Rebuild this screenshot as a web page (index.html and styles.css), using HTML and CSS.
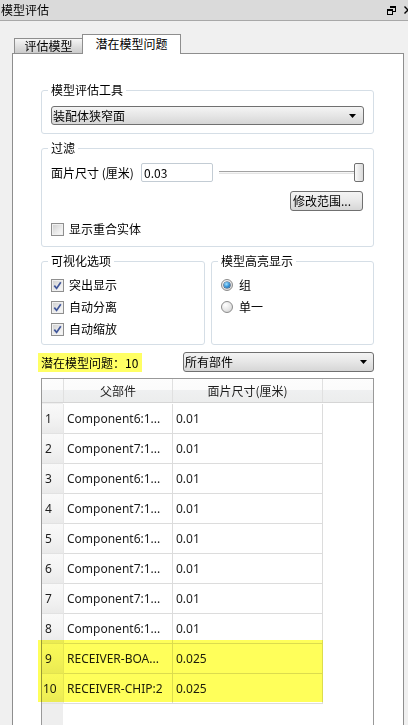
FILE: index.html
```html
<!DOCTYPE html>
<html lang="zh">
<head>
<meta charset="utf-8">
<title>模型评估</title>
<link rel="stylesheet" href="styles.css">
</head>
<body>
<div class="titlebar">
  <span class="title">模型评估</span>
  <svg class="restore" viewBox="0 0 9 9" width="9" height="9" fill="#000">
    <rect x="3" y="0" width="6" height="2"/>
    <rect x="8" y="2" width="1" height="4"/>
    <rect x="6" y="5" width="2" height="1"/>
    <rect x="0" y="3" width="6" height="2"/>
    <rect x="0" y="5" width="1" height="4"/>
    <rect x="5" y="5" width="1" height="4"/>
    <rect x="0" y="8" width="6" height="1"/>
  </svg>
  <svg class="close" viewBox="0 0 8 8" width="8" height="8">
    <path d="M0.5 0.5 L7.5 7.5 M7.5 0.5 L0.5 7.5" stroke="#000" stroke-width="1.4" fill="none"/>
  </svg>
</div>

<div class="tabs">
  <div class="tab">评估模型</div>
  <div class="tab active">潜在模型问题</div>
</div>

<div class="panel">
  <fieldset class="group tool">
    <legend>模型评估工具</legend>
    <div class="combo">
      <span class="combo-text">装配体狭窄面</span>
      <svg class="arrow" viewBox="0 0 7 4" width="7" height="4"><polygon points="0,0 7,0 3.5,4" fill="#000"/></svg>
    </div>
  </fieldset>

  <fieldset class="group filter">
    <legend>过滤</legend>
    <div class="row size-row">
      <span class="size-label">面片尺寸 (厘米)</span>
      <div class="input">0.03</div>
      <div class="slider"><div class="track"></div><div class="thumb"></div></div>
    </div>
    <div class="row btn-row"><div class="button">修改范围...</div></div>
    <div class="opt check-row"><span class="cb"></span><span>显示重合实体</span></div>
  </fieldset>

  <div class="pair">
    <fieldset class="group vis">
      <legend>可视化选项</legend>
      <div class="opts">
        <div class="opt"><span class="cb"><svg viewBox="0 0 9 9" width="9" height="9"><path d="M1.3 4.6 L3.6 7.4 L7.8 1.2" stroke="#41579a" stroke-width="1.7" fill="none"/></svg></span><span>突出显示</span></div>
        <div class="opt"><span class="cb"><svg viewBox="0 0 9 9" width="9" height="9"><path d="M1.3 4.6 L3.6 7.4 L7.8 1.2" stroke="#41579a" stroke-width="1.7" fill="none"/></svg></span><span>自动分离</span></div>
        <div class="opt"><span class="cb"><svg viewBox="0 0 9 9" width="9" height="9"><path d="M1.3 4.6 L3.6 7.4 L7.8 1.2" stroke="#41579a" stroke-width="1.7" fill="none"/></svg></span><span>自动缩放</span></div>
      </div>
    </fieldset>
    <fieldset class="group hl">
      <legend>模型高亮显示</legend>
      <div class="opts">
        <div class="opt radio"><span class="rb on"><span class="dot"></span></span><span>组</span></div>
        <div class="opt radio"><span class="rb"></span><span>单一</span></div>
      </div>
    </fieldset>
  </div>

  <div class="issue-row">
    <span class="issue-label">潜在模型问题：10</span>
    <div class="combo combo-parts">
      <span class="combo-text">所有部件</span>
      <svg class="arrow" viewBox="0 0 7 4" width="7" height="4"><polygon points="0,0 7,0 3.5,4" fill="#000"/></svg>
    </div>
  </div>

  <div class="table">
    <div class="thead">
      <div class="th rn"></div>
      <div class="th c1">父部件</div>
      <div class="th c2">面片尺寸(厘米)</div>
      <div class="th c3"></div>
    </div>
    <div class="tbody">
      <div class="tr"><div class="td rn">1</div><div class="td c1">Component6:1...</div><div class="td c2">0.01</div><div class="td c3"></div></div>
      <div class="tr"><div class="td rn">2</div><div class="td c1">Component7:1...</div><div class="td c2">0.01</div><div class="td c3"></div></div>
      <div class="tr"><div class="td rn">3</div><div class="td c1">Component6:1...</div><div class="td c2">0.01</div><div class="td c3"></div></div>
      <div class="tr"><div class="td rn">4</div><div class="td c1">Component7:1...</div><div class="td c2">0.01</div><div class="td c3"></div></div>
      <div class="tr"><div class="td rn">5</div><div class="td c1">Component6:1...</div><div class="td c2">0.01</div><div class="td c3"></div></div>
      <div class="tr"><div class="td rn">6</div><div class="td c1">Component7:1...</div><div class="td c2">0.01</div><div class="td c3"></div></div>
      <div class="tr"><div class="td rn">7</div><div class="td c1">Component7:1...</div><div class="td c2">0.01</div><div class="td c3"></div></div>
      <div class="tr"><div class="td rn">8</div><div class="td c1">Component6:1...</div><div class="td c2">0.01</div><div class="td c3"></div></div>
      <div class="tr"><div class="td rn">9</div><div class="td c1">RECEIVER-BOA...</div><div class="td c2">0.025</div><div class="td c3"></div></div>
      <div class="tr"><div class="td rn rn2">10</div><div class="td c1">RECEIVER-CHIP:2</div><div class="td c2">0.025</div><div class="td c3"></div></div>
    </div>
    <div class="highlight"></div>
  </div>
</div>
</body>
</html>
```

FILE: styles.css
```css
* { box-sizing: border-box; }
html, body { margin: 0; padding: 0; }
body {
  width: 408px;
  height: 725px;
  overflow: hidden;
  background: #f0f0f0;
  font-family: "Noto Sans CJK SC", "Noto Sans", sans-serif;
  font-size: 12px;
  line-height: 16px;
  color: #000;
}

/* title bar */
.titlebar {
  height: 21px;
  border-bottom: 1px solid #a8a8a8;
  background: #dadada;
  display: flex;
  align-items: center;
  padding-left: 1px;
  overflow: hidden;
}
.title { flex: 1; }
.restore { flex-shrink: 0; margin-right: 8px; }
.close { flex-shrink: 0; margin-right: -4px; }

/* tabs */
.tabs {
  height: 32px;
  display: flex;
  align-items: flex-end;
  padding-left: 14px;
}
.tab {
  width: 68px;
  height: 15px;
  border: 1px solid #8e8e8e;
  border-right: none;
  border-bottom: none;
  background: linear-gradient(#f6f6f6, #dedede 55%, #cbcbcb);
  display: flex;
  align-items: center;
  justify-content: center;
  line-height: 14px;
}
.tab.active {
  width: 99px;
  height: 20px;
  border-right: 1px solid #8e8e8e;
  background: #fff;
  margin-bottom: -1px;
  padding-bottom: 2px;
  position: relative;
  z-index: 1;
}

/* panel */
.panel {
  margin-left: 12px;
  width: 392px;
  height: 690px;
  border: 1px solid #8e8e8e;
  background: #fff;
  padding: 28px 29px 0 28px;
}

/* group boxes */
.group {
  margin: 0;
  min-width: 0;
  border: 1px solid #d5dee6;
  border-radius: 3px;
  padding: 8px 9px 8px;
}
.group legend {
  padding: 0 3px;
  margin-left: -3px;
  line-height: 16px;
}
.filter { margin-top: 6px; padding: 7px 9px 9px; }

/* combo box */
.combo {
  height: 19px;
  border: 1px solid #707070;
  border-radius: 3px;
  background: linear-gradient(#f4f4f4, #e6e6e6 50%, #d6d6d6);
  display: flex;
  align-items: center;
  padding: 0 7px 0 1px;
}
.combo-text { flex: 1; line-height: 16px; }
.arrow { flex-shrink: 0; }

/* filter rows */
.row { display: flex; align-items: center; }
.size-row { height: 19px; }
.size-label { width: 90px; flex-shrink: 0; }
.input {
  width: 72px;
  height: 19px;
  flex-shrink: 0;
  border: 1px solid #c3ccd4;
  border-radius: 2px;
  padding-left: 2px;
  line-height: 17px;
}
.slider {
  flex: 1;
  margin-left: 6px;
  height: 19px;
  display: flex;
  align-items: center;
}
.track {
  flex: 1;
  height: 3px;
  border-top: 1px solid #a2a2a2;
  border-bottom: 1px solid #e4e4e4;
  background: #f6f6f6;
}
.thumb {
  width: 10px;
  height: 19px;
  border: 1px solid #707070;
  border-radius: 2px;
  background: linear-gradient(to right, #fbfbfb, #d9d9d9);
}
.btn-row { margin-top: 9px; justify-content: flex-end; }
.button {
  width: 73px;
  height: 20px;
  margin-right: 1px;
  border: 1px solid #707070;
  border-radius: 3px;
  background: linear-gradient(#f4f4f4, #e8e8e8 50%, #d6d6d6);
  display: flex;
  align-items: center;
  padding-left: 2px;
}
.check-row { margin-top: 10px; }

/* options */
.opts { display: flex; flex-direction: column; gap: 6px; }
.opt { display: flex; align-items: center; height: 16px; gap: 5px; }
.opt.radio { gap: 6px; }
.cb {
  width: 13px;
  height: 13px;
  flex-shrink: 0;
  border: 1px solid #8f8f8f;
  background: linear-gradient(135deg, #cdcdcd, #ececec 60%, #fafafa);
  box-shadow: inset 0 0 0 1px #f0f0f0;
  display: flex;
  align-items: center;
  justify-content: center;
}
.rb {
  width: 12px;
  height: 12px;
  flex-shrink: 0;
  border-radius: 50%;
  border: 1px solid #8c8c8c;
  background: radial-gradient(circle at 35% 30%, #ffffff, #e6e6e6 55%, #c8c8c8);
  display: flex;
  align-items: center;
  justify-content: center;
}
.dot {
  width: 6px;
  height: 6px;
  border-radius: 50%;
  background: radial-gradient(circle at 40% 35%, #a6e3ff, #2f8fd6 55%, #124f8c);
  box-shadow: 0 0 0 0.6px #1d3f66;
}

.pair { display: flex; gap: 6px; margin-top: 6px; }
.vis { width: 164px; flex-shrink: 0; padding: 8px 9px 7px; }
.hl { flex: 1; padding: 8px 9px 7px; }

/* issue row */
.issue-row {
  display: flex;
  align-items: center;
  height: 20px;
  margin-top: 7px;
}
.issue-label {
  background: #ffff64;
  margin-left: -3px;
  width: 104px;
  height: 19px;
  padding-left: 3px;
  line-height: 19px;
}
.combo-parts {
  margin-left: auto;
  width: 191px;
  height: 20px;
  padding-right: 6px;
}

/* table */
.table {
  margin-top: 6px;
  height: 360px;
  border: 1px solid #999;
  position: relative;
  display: flex;
  flex-direction: column;
  background: #fff;
}
.thead {
  display: flex;
  height: 24px;
  flex-shrink: 0;
  border-bottom: 1px solid #d5d5d5;
  background: linear-gradient(#fdfdfd 0, #fbfbfb 50%, #eff0f1 50%, #eceded);
}
.th {
  border-right: 1px solid #e0e0e0;
  display: flex;
  align-items: center;
  justify-content: center;
  color: #1e1e1e;
}
.rn { width: 22px; flex-shrink: 0; }
.c1 { width: 109px; flex-shrink: 0; }
.c2 { width: 150px; flex-shrink: 0; }
.c3 { flex: 1; }
.th.c3 { border-right: none; }
.tbody {
  flex: 1;
  padding-top: 1px;
  background: linear-gradient(to right, #eeeeee 21px, #fff 21px);
}
.tr { display: flex; height: 30px; }
.td {
  border-right: 1px solid #dcdcdc;
  border-bottom: 1px solid #dcdcdc;
  display: flex;
  align-items: center;
  padding: 1px 0 0 3px;
  white-space: nowrap;
  overflow: hidden;
  font-family: "Noto Sans", "Open Sans", sans-serif;
  font-size: 12px;
  color: #1c1c1c;
  background: #fff;
}
.td.rn {
  background: linear-gradient(#f9f9f9, #f4f4f4 45%, #eaeaea);
  border-right: 1px solid #e6e6e6;
  border-bottom: 1px solid #e2e2e2;
  padding-left: 3px;
}
.td.rn2 { padding-left: 1px; }
.td.c3 { border: none; }
.highlight {
  position: absolute;
  left: -4px;
  top: 261px;
  width: 285px;
  height: 62px;
  background: #ffff5a;
  mix-blend-mode: multiply;
}
```
